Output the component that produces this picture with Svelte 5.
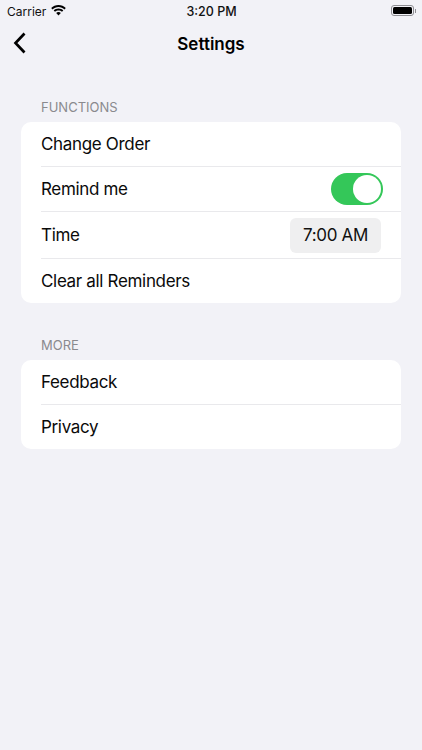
<script lang="ts">
  let remind = $state(true);

  const functions = [
    { key: "order", label: "Change Order", height: 45 },
    { key: "remind", label: "Remind me", height: 45 },
    { key: "time", label: "Time", height: 47 },
    { key: "clear", label: "Clear all Reminders", height: 44 },
  ];

  const more = [
    { key: "feedback", label: "Feedback", height: 45 },
    { key: "privacy", label: "Privacy", height: 44 },
  ];
</script>

<div class="screen">
  <div class="status-bar">
    <div class="carrier">
      <span>Carrier</span>
      <svg class="wifi" width="15" height="11" viewBox="0 0 15 11">
        <path d="M7.500 0C4.700 0 2.100 1.100.2 3l1.300 1.400C3.100 2.900 5.200 2 7.500 2s4.400.9 6 2.400L14.800 3C12.900 1.100 10.300 0 7.500 0z" fill="#000" />
        <path d="M7.500 3.500c-1.800 0-3.500.7-4.800 1.900L4 6.800c.9-.8 2.200-1.300 3.500-1.300s2.600.5 3.500 1.300l1.300-1.400C11 4.200 9.300 3.500 7.500 3.500z" fill="#000" />
        <path d="M7.500 7c-.9 0-1.700.3-2.300.9L7.500 10.600l2.300-2.700C9.200 7.300 8.400 7 7.500 7z" fill="#000" />
      </svg>
    </div>
    <span class="clock">3:20 PM</span>
    <div class="battery">
      <div class="battery-body"><div class="battery-fill"></div></div>
      <div class="battery-cap"></div>
    </div>
  </div>

  <header class="nav">
    <button class="back" aria-label="Back">
      <svg width="14" height="22" viewBox="0 0 14 22">
        <path d="M11.500 1.500 2.500 11l9 9.500" fill="none" stroke="#000" stroke-width="2.700" />
      </svg>
    </button>
    <h1>Settings</h1>
  </header>

  <section class="functions">
    <h2>FUNCTIONS</h2>
    <div class="card">
      {#each functions as row}
        <div class="row" style="height: {row.height}px">
          <span class="label">{row.label}</span>
          {#if row.key === "remind"}
            <button
              class="switch"
              class:on={remind}
              aria-label="Remind me"
              onclick={() => (remind = !remind)}
            >
              <span class="knob"></span>
            </button>
          {:else if row.key === "time"}
            <span class="time-pill">7:00 AM</span>
          {/if}
        </div>
      {/each}
    </div>
  </section>

  <section class="more">
    <h2>MORE</h2>
    <div class="card">
      {#each more as row}
        <div class="row" style="height: {row.height}px">
          <span class="label">{row.label}</span>
        </div>
      {/each}
    </div>
  </section>
</div>

<style>
  :global(body) {
    margin: 0;
    background: #f2f2f7;
  }

  .screen {
    height: 750px;
    overflow: hidden;
    background: #f2f2f7;
    color: #000;
    font-family: Inter, "Liberation Sans", sans-serif;
  }

  .status-bar {
    display: grid;
    grid-template-columns: 1fr auto 1fr;
    align-items: center;
    height: 22px;
    padding: 0 6px 0 7px;
    font-size: 12px;
    font-weight: 400;
    color: #111;
  }

  .carrier {
    display: flex;
    align-items: center;
    gap: 5px;
  }

  .wifi {
    margin-top: -1px;
  }

  .clock {
    font-size: 12.500px;
    font-weight: 500;
  }

  .battery {
    display: flex;
    align-items: center;
    justify-content: flex-end;
    gap: 1px;
    margin-top: -1px;
  }

  .battery-body {
    box-sizing: border-box;
    width: 23px;
    height: 11px;
    padding: 1px;
    border: 1px solid #8e8e93;
    border-radius: 3px;
  }

  .battery-fill {
    height: 100%;
    background: #000;
    border-radius: 1.500px;
  }

  .battery-cap {
    width: 1px;
    height: 4px;
    background: #8e8e93;
  }

  .nav {
    position: relative;
    display: flex;
    align-items: center;
    justify-content: center;
    height: 44px;
  }

  .nav h1 {
    margin: 0;
    font-size: 17px;
    font-weight: 600;
  }

  .back {
    position: absolute;
    left: 13px;
    top: 10px;
    display: flex;
    padding: 0;
    background: none;
    border: none;
  }

  section {
    padding: 0 21px;
  }

  .functions {
    margin-top: 33px;
  }

  .more {
    margin-top: 34px;
  }

  h2 {
    margin: 0 0 7px 20px;
    font-size: 13px;
    line-height: 16px;
    font-weight: 400;
    color: #8a8a8e;
  }

  .card {
    background: #fff;
    border-radius: 10px;
    overflow: hidden;
  }

  .row {
    box-sizing: border-box;
    display: flex;
    align-items: center;
    justify-content: space-between;
    margin-left: 20px;
    padding-right: 20px;
    border-bottom: 1px solid #e9e9ec;
  }

  .row:last-child {
    border-bottom: none;
  }

  .label {
    font-size: 17px;
    letter-spacing: -0.330px;
    color: #0a0a0a;
  }

  .switch {
    position: relative;
    width: 52px;
    height: 32px;
    margin-right: -2px;
    padding: 0;
    border: none;
    border-radius: 16px;
    background: #e5e5ea;
  }

  .switch.on {
    background: #34c759;
  }

  .knob {
    position: absolute;
    top: 2px;
    left: 2px;
    width: 28px;
    height: 28px;
    border-radius: 50%;
    background: #fff;
  }

  .switch.on .knob {
    left: 22px;
  }

  .time-pill {
    padding: 0 13px;
    height: 35px;
    line-height: 35px;
    font-size: 17px;
    letter-spacing: -0.330px;
    color: #111;
    background: #efeff0;
    border-radius: 6px;
  }
</style>
